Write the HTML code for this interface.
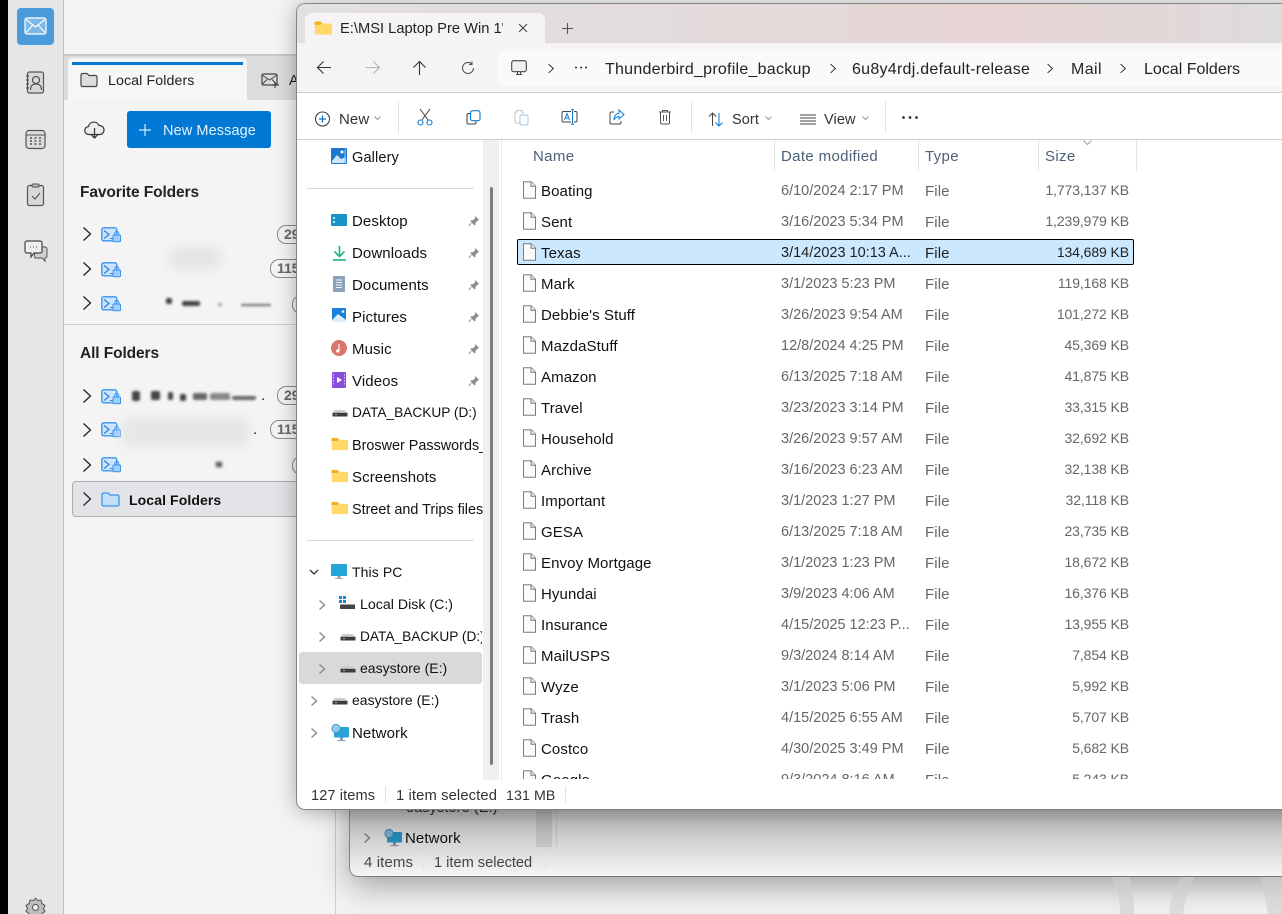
<!DOCTYPE html>
<html><head><meta charset="utf-8"><title>Explorer</title>
<style>
html,body{margin:0;padding:0;background:#f2f2f2}
#p{position:relative;width:1282px;height:914px;overflow:hidden;background:#f1f1f1;font-family:"Liberation Sans",sans-serif;font-size:15px;color:#1a1a1a}
#p div,#p svg{position:absolute}
.t{white-space:nowrap;line-height:20px;height:20px;letter-spacing:.1px;margin-top:2px}
.m1{margin-top:1px}
.n{font-size:15px;color:#111}
.g{color:#5f5f5f}
.h{color:#4c607a;letter-spacing:.35px}
.sep{background:#e3e3e3;width:1px}
.div{background:#d9d9d9;height:1px}
.r{left:0;width:640px;height:31px;line-height:31px;white-space:nowrap}
.r svg{left:20px;top:6px}
.r div{top:1px;height:31px;line-height:31px;letter-spacing:.1px}
.a{left:40px;color:#111}
.b{left:280px;color:#666;letter-spacing:0;width:135px;overflow:hidden;font-size:14.5px}
#p .r .b{letter-spacing:0}
.c{left:424px;color:#666}
.d{right:12px;color:#666;left:auto;font-size:14px}
#p .r .d{letter-spacing:-.1px;top:0}
.pill{border:1.5px solid #8a8a8a;border-radius:9px;height:17px;line-height:17px;font-size:14px;font-weight:bold;color:#666;padding:0 6px;box-sizing:content-box}
.smear{background:#dcdcdc;filter:blur(5px);border-radius:8px}
.sp{background:#444;filter:blur(1.200px);border-radius:2px}
</style></head><body>
<div id="p">
<svg width="0" height="0" style="position:absolute">
<defs>
<symbol id="file" viewBox="0 0 16 18"><path d="M2.500 .8h7.700l4.300 4.300v12.100h-12z" fill="#fbfbfb" stroke="#7b7b7b" stroke-width="1"/><path d="M10 .8v4.400h4.500" fill="#eee" stroke="#7b7b7b"/></symbol>
<symbol id="acct" viewBox="0 0 20 16"><rect x=".8" y=".8" width="15" height="13" rx="2" fill="#cfe4fb" stroke="#3b93ee" stroke-width="1.400"/><path d="M3 3.500l5 4-5 4" fill="none" stroke="#2b86e6" stroke-width="1.300"/><path d="M9 11.500h3" stroke="#2b86e6"/><rect x="12" y="8" width="7.500" height="6.800" rx="1" fill="#a5cef8" stroke="#3b93ee"/><path d="M13.800 8V6.400a2 2 0 0 1 4 0V8" fill="none" stroke="#3b93ee"/></symbol>
<symbol id="chev" viewBox="0 0 10 16"><path d="M1.500 1.500l7 6.500-7 6.500" fill="none" stroke="#222" stroke-width="1.300"/></symbol>
<symbol id="fold" viewBox="0 0 18 14"><path d="M.5 2a1.500 1.500 0 0 1 1.500-1.500h4.500l2 2h8a1.500 1.500 0 0 1 1.500 1.500v8a1.500 1.500 0 0 1-1.500 1.500h-14a1.500 1.500 0 0 1-1.500-1.500z" fill="#ffd96a"/><path d="M.5 2a1.500 1.500 0 0 1 1.500-1.500h4.500l2 2-2 1.300h-6z" fill="#f2b01e"/></symbol>
<symbol id="pin" viewBox="0 0 12 12"><path d="M7 .8l4.200 4.200-1.500.6-2 2-.3 2.400-1 .4-4-4 .4-1 2.400-.3 2-2z" fill="#8d8d8d"/><path d="M3.200 8.200L.8 11" stroke="#8d8d8d"/></symbol>
<symbol id="drive" viewBox="0 0 16 8"><path d="M3 1h10L15.500 4v3.500H.5V4z" fill="#cfcfcf"/><rect x=".5" y="3.800" width="15" height="3.700" fill="#3d3d3d"/><rect x="3" y="5" width="2" height="1" fill="#5ce06e"/></symbol>
<symbol id="net" viewBox="0 0 18 18"><rect x="3" y="3" width="15" height="10.500" rx="1" fill="#29a3d8"/><rect x="9" y="13.500" width="3" height="2.500" fill="#8a9aa8"/><rect x="6.500" y="16" width="8" height="1.200" fill="#9aa8b5"/><circle cx="5" cy="4.500" r="4.200" fill="#8ecbef" stroke="#3f8fc4" stroke-width=".8"/></symbol>
<symbol id="cr" viewBox="0 0 8 12"><path d="M1.500 1.500L6.500 6l-5 4.500" fill="none" stroke="#8c8c8c" stroke-width="1.400"/></symbol>
</defs></svg>

<!-- Thunderbird layer -->
<div style="left:0;top:0;width:8px;height:914px;background:#000"></div>
<div style="left:8px;top:0;width:55px;height:914px;background:#e6e6e6"></div>
<div style="left:63px;top:0;width:1px;height:914px;background:#bdbdbd"></div>
<div style="left:64px;top:0;width:1218px;height:54px;background:#f4f4f4"></div>
<div style="left:64px;top:54px;width:1218px;height:2px;background:#c8c8c8"></div>
<div style="left:64px;top:56px;width:240px;height:44px;background:#dcdcdc"></div>
<div style="left:64px;top:100px;width:271px;height:814px;background:#f4f4f4"></div>
<div style="left:335px;top:100px;width:1px;height:814px;background:#cfcfcf"></div>
<div style="left:336px;top:100px;width:946px;height:814px;background:#f3f3f3"></div>
<div style="left:68px;top:58px;width:179px;height:42px;background:#f6f6f6;border-radius:4px 4px 0 0"></div>
<div style="left:72px;top:62px;width:171px;height:3px;background:#0078d4"></div>
<svg style="left:80px;top:72px" width="18" height="16" viewBox="0 0 18 16"><path d="M1 3a1.500 1.500 0 0 1 1.500-1.500H7l2 2h6.500A1.500 1.500 0 0 1 17 5v8a1.500 1.500 0 0 1-1.500 1.500h-13A1.500 1.500 0 0 1 1 13z" fill="#ddd" stroke="#444" stroke-width="1.200"/></svg>
<div class="t m1" style="left:108px;top:70px;color:#222;font-size:14.2px">Local Folders</div>
<svg style="left:261px;top:72px" width="19" height="17" viewBox="0 0 19 17"><rect x="1" y="2" width="15" height="11" rx="1.500" fill="#ddd" stroke="#444" stroke-width="1.200"/><path d="M1 3l7.500 5 7.500-5M1 12.500l5-5M16 12.500l-5-5" fill="none" stroke="#444"/><path d="M14 10v6M11 13h7" stroke="#444" stroke-width="1.200"/></svg>
<div class="t m1" style="left:289px;top:70px;color:#222;font-size:14.5px">A</div>

<!-- rail -->
<div style="left:17px;top:8px;width:37px;height:37px;background:#4a9bdc;border-radius:4px"></div>
<svg style="left:24px;top:17px" width="23" height="19" viewBox="0 0 23 19"><rect x="1" y="1" width="21" height="16" rx="2" fill="#7cb8e8" stroke="#e8f3fc" stroke-width="1.400"/><path d="M2 2.500l9.500 7.500 9.500-7.500M2 15.500l6.500-7M21 15.500l-6.500-7" fill="none" stroke="#fff" stroke-width="1.200"/></svg>
<svg style="left:25px;top:71px" width="20" height="23" viewBox="0 0 20 23"><rect x="2.500" y="1" width="16" height="21" rx="2" fill="#d8d8d8" stroke="#555" stroke-width="1.200"/><circle cx="11" cy="9" r="3.500" fill="none" stroke="#444" stroke-width="1.100"/><path d="M5.500 19c0-4 2-6 5.500-6s5.500 2 5.500 6" fill="none" stroke="#444" stroke-width="1.100"/><path d="M1 5h3M1 9h3M1 13h3M1 17h3" stroke="#444"/></svg>
<svg style="left:25px;top:129px" width="21" height="21" viewBox="0 0 21 21"><rect x="1" y="1.500" width="19" height="18" rx="3" fill="#dcdcdc" stroke="#555" stroke-width="1.200"/><path d="M1 6h19" stroke="#555"/><path d="M5 9h2M9.500 9h2M14 9h2M5 12h2M9.500 12h2M14 12h2M5 15h2M9.500 15h2M14 15h2" stroke="#555" stroke-width="1.500"/></svg>
<svg style="left:26px;top:183px" width="19" height="24" viewBox="0 0 19 24"><rect x="1.500" y="2.500" width="16" height="20" rx="2" fill="#d8d8d8" stroke="#555" stroke-width="1.200"/><rect x="6" y="1" width="7" height="3" rx="1" fill="#bbb" stroke="#555"/><path d="M6 13l3 3 5-6" fill="none" stroke="#555" stroke-width="1.100"/></svg>
<svg style="left:24px;top:240px" width="24" height="23" viewBox="0 0 24 23"><path d="M9 7h12a2 2 0 0 1 2 2v7a2 2 0 0 1-2 2v3l-3-3h-7z" fill="#cfcfcf" stroke="#555"/><path d="M3 1h13a2 2 0 0 1 2 2v8a2 2 0 0 1-2 2h-6l-3 4v-4H3a2 2 0 0 1-2-2V3a2 2 0 0 1 2-2z" fill="#efefef" stroke="#444" stroke-width="1.200"/><path d="M6 7h1M9 7h1M12 7h1" stroke="#555"/></svg>
<svg style="left:25px;top:897px" width="21" height="20" viewBox="0 0 21 20"><path d="M10.500 1l2 2.500 3.500-.5 1 3.500 3 2-1.500 3 1.500 3-3 2-1 3h-11l-1-3-3-2 1.500-3-1.500-3 3-2 1-3.500 3.500.5z" fill="#bcbcbc" stroke="#555"/><circle cx="10.500" cy="10.500" r="3" fill="#eee" stroke="#555"/></svg>

<!-- mail pane -->
<svg style="left:84px;top:120px" width="21" height="20" viewBox="0 0 21 20"><path d="M5 14.500a4 4 0 0 1-.5-8 5.500 5.500 0 0 1 10.500-1 4.500 4.500 0 0 1 1 9z" fill="#ececec" stroke="#333" stroke-width="1.200"/><path d="M10.500 8v10M7 14.500l3.500 3.500 3.500-3.500" fill="none" stroke="#333" stroke-width="1.200"/></svg>
<div style="left:127px;top:111px;width:144px;height:37px;background:#0078d4;border-radius:3px"></div>
<svg style="left:139px;top:124px" width="12" height="12" viewBox="0 0 12 12"><path d="M6 0v12M0 6h12" stroke="#d9ecfb" stroke-width="1.200"/></svg>
<div class="t m1" style="left:163px;top:120px;color:#e4f2fd;font-size:14.5px">New Message</div>
<div class="t" style="left:80px;top:181px;font-size:15.5px;font-weight:bold;color:#222;letter-spacing:-.1px">Favorite Folders</div>
<div class="t" style="left:80px;top:342px;font-size:15.5px;font-weight:bold;color:#222;letter-spacing:-.1px">All Folders</div>
<div class="div" style="left:64px;top:324px;width:233px;background:#d0d0d0"></div>

<svg style="left:82px;top:226px" width="10" height="16"><use href="#chev"/></svg>
<svg style="left:82px;top:261px" width="10" height="16"><use href="#chev"/></svg>
<svg style="left:82px;top:295px" width="10" height="16"><use href="#chev"/></svg>
<svg style="left:101px;top:227px" width="20" height="16"><use href="#acct"/></svg>
<svg style="left:101px;top:262px" width="20" height="16"><use href="#acct"/></svg>
<svg style="left:101px;top:296px" width="20" height="16"><use href="#acct"/></svg>
<div class="smear" style="left:170px;top:247px;width:50px;height:22px;background:#e4e4e4"></div>
<div class="sp" style="left:166px;top:298px;width:6px;height:6px"></div>
<div class="sp" style="left:182px;top:301px;width:18px;height:5px"></div>
<div class="sp" style="left:218px;top:303px;width:4px;height:3px;background:#999"></div>
<div class="sp" style="left:241px;top:304px;width:30px;height:2px;background:#666"></div>
<div class="pill" style="left:277px;top:225px">29</div>
<div class="pill" style="left:270px;top:259px">115</div>
<div class="pill" style="left:292px;top:295px">1</div>

<svg style="left:82px;top:388px" width="10" height="16"><use href="#chev"/></svg>
<svg style="left:82px;top:422px" width="10" height="16"><use href="#chev"/></svg>
<svg style="left:82px;top:457px" width="10" height="16"><use href="#chev"/></svg>
<svg style="left:101px;top:389px" width="20" height="16"><use href="#acct"/></svg>
<svg style="left:101px;top:422px" width="20" height="16"><use href="#acct"/></svg>
<svg style="left:101px;top:457px" width="20" height="16"><use href="#acct"/></svg>
<div class="sp" style="left:132px;top:391px;width:8px;height:10px"></div>
<div class="sp" style="left:151px;top:391px;width:9px;height:9px"></div>
<div class="sp" style="left:168px;top:392px;width:5px;height:8px"></div>
<div class="sp" style="left:180px;top:394px;width:6px;height:7px"></div>
<div class="sp" style="left:193px;top:393px;width:14px;height:7px;background:#666"></div>
<div class="sp" style="left:210px;top:393px;width:20px;height:7px;background:#888"></div>
<div class="sp" style="left:232px;top:396px;width:24px;height:4px;background:#666"></div>
<div class="t" style="left:261px;top:384px;color:#222">.</div>
<div class="smear" style="left:122px;top:418px;width:128px;height:28px;background:#e6e6e6"></div>
<div class="t" style="left:253px;top:418px;color:#222">.</div>
<div class="pill" style="left:277px;top:386px">29</div>
<div class="pill" style="left:270px;top:420px">115</div>
<div class="pill" style="left:292px;top:456px">1</div>
<div style="left:216px;top:462px;width:6px;height:5px;background:#444;filter:blur(1.500px)"></div>
<div style="left:72px;top:481px;width:240px;height:34px;background:#e3e4e7;border:1px solid #adadad;border-radius:4px"></div>
<svg style="left:82px;top:491px" width="10" height="16"><use href="#chev"/></svg>
<svg style="left:101px;top:492px" width="19" height="15" viewBox="0 0 19 15"><path d="M1 2.500A1.500 1.500 0 0 1 2.500 1H7l2 2h7.500A1.500 1.500 0 0 1 18 4.500v8a1.500 1.500 0 0 1-1.500 1.500h-14A1.500 1.500 0 0 1 1 12.500z" fill="#c3dff9" stroke="#3b93ee" stroke-width="1.300"/></svg>
<div class="t" style="left:129px;top:488px;font-weight:bold;font-size:14px;color:#111">Local Folders</div>

<!-- Back explorer -->
<div style="left:350px;top:500px;width:960px;height:376px;background:#fbfbfb;border-radius:0 0 8px 8px;box-shadow:0 8px 34px rgba(0,0,0,.38),0 0 0 1px #9e9e9e"></div>
<svg style="left:1090px;top:877px" width="192" height="37" viewBox="0 0 192 37"><path d="M22 0c6 12 8 25 8 37h14C44 22 42 10 40 0zM92 0c-7 10-12 24-13 37h14c2-14 6-26 12-37zM170 0c2 12 7 26 8 37h14V0z" fill="#cfcfcf" opacity=".6"/></svg>
<div style="left:536px;top:800px;width:16px;height:47px;background:#e6e6e6"></div>
<div style="left:556px;top:800px;width:1px;height:47px;background:#e8e8e8"></div>
<div class="t" style="left:406px;top:796px;color:#333;font-size:14.5px">easystore (E:)</div>
<svg style="left:363px;top:832px" width="8" height="12"><use href="#cr"/></svg>
<svg style="left:384px;top:829px" width="18" height="18"><use href="#net"/></svg>
<div class="t n" style="left:405px;top:827px;">Network</div>
<div style="left:350px;top:809px;width:932px;height:67px;background:linear-gradient(180deg,rgba(0,0,0,.3),rgba(0,0,0,.02));border-radius:0 0 0 8px"></div>
<div class="t" style="left:364px;top:851px;color:#444">4 items</div>
<div class="sep" style="left:423px;top:853px;height:17px"></div>
<div class="t" style="left:434px;top:851px;color:#444;letter-spacing:0;font-size:14.6px">1 item selected</div>
<div class="sep" style="left:545px;top:853px;height:17px"></div>

<!-- Front explorer -->
<div style="left:297px;top:4px;width:1000px;height:805px;background:#fff;border-radius:8px 0 0 8px;box-shadow:0 2px 22px rgba(0,0,0,.34),0 0 0 1px #9c9c9c;overflow:hidden">
  <div style="left:0;top:0;width:1000px;height:39px;background:linear-gradient(90deg,#e3e0e0 0%,#e2dcdc 35%,#e8d4d4 70%,#dddcdc 100%)"></div>
  <div style="left:0;top:39px;width:1000px;height:49px;background:#f5f3f3"></div>
  <div style="left:0;top:88px;width:1000px;height:1px;background:#cfcaca"></div>
  <div style="left:0;top:135px;width:1000px;height:1px;background:#d2cfcf"></div>
</div>
<div style="left:305px;top:13px;width:240px;height:31px;background:#f5f3f3;border-radius:7px 7px 0 0"></div>
<svg style="left:314px;top:21px" width="18" height="14"><use href="#fold"/></svg>
<div class="t m1" style="left:340px;top:18px;width:163px;overflow:hidden;font-size:14.7px;color:#222;letter-spacing:0">E:\MSI Laptop Pre Win 1'</div>
<svg style="left:518px;top:23px" width="10" height="10" viewBox="0 0 10 10"><path d="M1 1l8 8M9 1l-8 8" stroke="#444" stroke-width="1.100"/></svg>
<svg style="left:562px;top:23px" width="11" height="11" viewBox="0 0 11 11"><path d="M5.500 0v11M0 5.500h11" stroke="#555" stroke-width="1.100"/></svg>

<svg style="left:316px;top:60px" width="16" height="15" viewBox="0 0 16 15"><path d="M15 7.500H2M7.500 1.500l-6 6 6 6" fill="none" stroke="#333" stroke-width="1.100"/></svg>
<svg style="left:365px;top:60px" width="16" height="15" viewBox="0 0 16 15"><path d="M1 7.500h13M8.500 1.500l6 6-6 6" fill="none" stroke="#b4b4b4" stroke-width="1.100"/></svg>
<svg style="left:412px;top:60px" width="15" height="16" viewBox="0 0 15 16"><path d="M7.500 15V2M1.500 7.500l6-6 6 6" fill="none" stroke="#333" stroke-width="1.100"/></svg>
<svg style="left:461px;top:61px" width="14" height="14" viewBox="0 0 14 14"><path d="M12.500 7a5.500 5.500 0 1 1-1.700-4M11 .5V3.500H8" fill="none" stroke="#555" stroke-width="1.100"/></svg>
<div style="left:498px;top:51px;width:784px;height:35px;background:#fbfafa;border-radius:5px 0 0 5px"></div>
<svg style="left:511px;top:60px" width="16" height="16" viewBox="0 0 16 16"><rect x=".7" y=".7" width="14.600" height="11" rx="2" fill="#f0f0f0" stroke="#444" stroke-width="1.100"/><path d="M5 14.500h6M6.500 12v2.500M9.500 12v2.500" stroke="#444"/></svg>
<svg style="left:547px;top:63px" width="8" height="11"><use href="#chev"/></svg>
<svg style="left:575px;top:66px" width="13" height="3" viewBox="0 0 13 3"><path d="M0 1.500h2M5 1.500h2M10 1.500h2" stroke="#333" stroke-width="1.600"/></svg>
<div class="t m1" style="left:605px;top:59px;font-size:16px;letter-spacing:.25px;color:#222">Thunderbird_profile_backup</div>
<svg style="left:829px;top:63px" width="8" height="11"><use href="#chev"/></svg>
<div class="t m1" style="left:852px;top:59px;font-size:16px;letter-spacing:.27px;color:#222">6u8y4rdj.default-release</div>
<svg style="left:1046px;top:63px" width="8" height="11"><use href="#chev"/></svg>
<div class="t m1" style="left:1071px;top:59px;font-size:16px;letter-spacing:.4px;color:#222">Mail</div>
<svg style="left:1119px;top:63px" width="8" height="11"><use href="#chev"/></svg>
<div class="t m1" style="left:1144px;top:59px;font-size:16px;letter-spacing:0;color:#222">Local Folders</div>

<!-- toolbar -->
<svg style="left:314px;top:111px" width="17" height="16" viewBox="0 0 17 16"><circle cx="8.500" cy="8" r="7" fill="none" stroke="#444" stroke-width="1.100"/><path d="M8.500 4.500v7M5 8h7" stroke="#0b73c9" stroke-width="1.200"/></svg>
<div class="t m1" style="left:339px;top:109px;color:#333">New</div>
<svg style="left:374px;top:116px" width="7" height="5" viewBox="0 0 7 5"><path d="M.5 .5l3 3 3-3" fill="none" stroke="#999"/></svg>
<div class="sep" style="left:398px;top:101px;height:32px"></div>
<svg style="left:417px;top:108px" width="16" height="18" viewBox="0 0 16 18"><path d="M3 1l8.500 11.500M13 1L4.500 12.500" stroke="#444" stroke-width="1"/><circle cx="3.500" cy="14.500" r="2.500" fill="none" stroke="#0b7ad1" stroke-width="1.100"/><circle cx="12.500" cy="14.500" r="2.500" fill="none" stroke="#0b7ad1" stroke-width="1.100"/></svg>
<svg style="left:466px;top:110px" width="15" height="15" viewBox="0 0 15 15"><rect x="4.500" y=".7" width="9.500" height="10" rx="2" fill="none" stroke="#0b7ad1" stroke-width="1.100"/><path d="M4 3.500H2.500A1.500 1.500 0 0 0 1 5v7.500A1.500 1.500 0 0 0 2.500 14h6a1.500 1.500 0 0 0 1.500-1.500V11.500" fill="none" stroke="#444" stroke-width="1.100"/></svg>
<svg style="left:514px;top:109px" width="15" height="17" viewBox="0 0 15 17"><path d="M1 3h2V1.500h5V3h1v11H2.500A1.500 1.500 0 0 1 1 12.500z" fill="none" stroke="#c6c6c6"/><rect x="6" y="6" width="8" height="10" rx="1.500" fill="#fff" stroke="#9cc9ec"/></svg>
<svg style="left:561px;top:109px" width="17" height="16" viewBox="0 0 17 16"><path d="M10 2.500H2.500A1.500 1.500 0 0 0 1 4v7.500A1.500 1.500 0 0 0 2.500 13H10M13 2.500h1.500A1.500 1.500 0 0 1 16 4v7.500A1.500 1.500 0 0 1 14.500 13H13" fill="none" stroke="#444"/><path d="M11.500 1v14M10 .7h3M10 15.300h3" stroke="#0b7ad1"/><path d="M3.500 11l2.500-6.500L8.500 11M4.500 9h3" fill="none" stroke="#0b7ad1"/></svg>
<svg style="left:609px;top:109px" width="16" height="16" viewBox="0 0 16 16"><path d="M5 3H2.500A1.500 1.500 0 0 0 1 4.500v9A1.500 1.500 0 0 0 2.500 15h8a1.500 1.500 0 0 0 1.500-1.500V12" fill="none" stroke="#444"/><path d="M10 1l5 4.500-5 4.500V7.500C7.500 7.500 6 9 5 11c0-4 2-6.500 5-6.500z" fill="none" stroke="#0b7ad1"/></svg>
<svg style="left:658px;top:109px" width="14" height="16" viewBox="0 0 14 16"><path d="M1 3h12M4.500 3V1.500h5V3M2.500 3v10.500A1.500 1.500 0 0 0 4 15h6a1.500 1.500 0 0 0 1.500-1.500V3M5.500 6v6M8.500 6v6" fill="none" stroke="#555"/></svg>
<div class="sep" style="left:691px;top:101px;height:32px"></div>
<svg style="left:708px;top:112px" width="16" height="15" viewBox="0 0 16 15"><path d="M4.500 14V1M1 4.500l3.500-3.500L8 4.500" fill="none" stroke="#444"/><path d="M11 1v13M7.500 10.500L11 14l3.500-3.500" fill="none" stroke="#0b7ad1"/></svg>
<div class="t m1" style="left:732px;top:109px;color:#333;font-size:14.5px">Sort</div>
<svg style="left:765px;top:116px" width="7" height="5" viewBox="0 0 7 5"><path d="M.5 .5l3 3 3-3" fill="none" stroke="#999"/></svg>
<svg style="left:800px;top:114px" width="16" height="11" viewBox="0 0 16 11"><path d="M0 1h16M0 4h16M0 7h16M0 10h16" stroke="#444"/></svg>
<div class="t m1" style="left:824px;top:109px;color:#333;font-size:14.5px">View</div>
<svg style="left:862px;top:116px" width="7" height="5" viewBox="0 0 7 5"><path d="M.5 .5l3 3 3-3" fill="none" stroke="#999"/></svg>
<div class="sep" style="left:885px;top:101px;height:32px"></div>
<svg style="left:902px;top:116px" width="16" height="3" viewBox="0 0 16 3"><circle cx="1.500" cy="1.500" r="1.400" fill="#333"/><circle cx="8" cy="1.500" r="1.400" fill="#333"/><circle cx="14.500" cy="1.500" r="1.400" fill="#333"/></svg>

<!-- nav -->
<div style="left:483px;top:140px;width:16px;height:640px;background:#f0f0f0"></div>
<div style="left:490px;top:187px;width:3px;height:578px;background:#7c7c7c;border-radius:2px"></div>
<div style="left:501px;top:140px;width:1px;height:640px;background:#ececec"></div>
<div class="div" style="left:307px;top:188px;width:167px"></div>
<div class="div" style="left:307px;top:540px;width:167px"></div>

<svg style="left:331px;top:148px" width="16" height="16" viewBox="0 0 16 16"><rect width="16" height="16" rx="1" fill="#1e78cf"/><path d="M1 13l5-6 4 4 5-2v6H1z" fill="#cfe7fa"/><circle cx="11" cy="4" r="1.500" fill="#fff"/><path d="M14 1v14" stroke="#8fc4ee"/></svg>
<div class="t n" style="left:352px;top:146px;font-size:14.6px">Gallery</div>
<svg style="left:331px;top:214px" width="17" height="12" viewBox="0 0 17 12"><rect width="16" height="12" rx="1" fill="#1893c7"/><rect x="2" y="3" width="2" height="2" fill="#bfeaf8"/><rect x="2" y="7" width="2" height="2" fill="#bfeaf8"/></svg>
<div class="t n" style="left:352px;top:210px">Desktop</div>
<svg style="left:333px;top:245px" width="13" height="16" viewBox="0 0 13 16"><path d="M6.500 1v10M1.500 6.500l5 5 5-5" fill="none" stroke="#1eb18c" stroke-width="1.600"/><path d="M0 15h13" stroke="#1eb18c" stroke-width="1.600"/></svg>
<div class="t n" style="left:352px;top:242px">Downloads</div>
<svg style="left:333px;top:276px" width="13" height="16" viewBox="0 0 13 16"><rect width="12" height="16" rx="1" fill="#8ba1bb"/><path d="M3 4h6M3 6.500h6M3 9h6M3 11.500h6" stroke="#eef2f7"/></svg>
<div class="t n" style="left:352px;top:274px">Documents</div>
<svg style="left:332px;top:308px" width="15" height="15" viewBox="0 0 15 15"><rect width="14" height="14" rx="1" fill="#1a80d8"/><path d="M0 12l6-6 8 6v2H0z" fill="#dceffc"/><circle cx="11" cy="3.500" r="1.300" fill="#fff"/></svg>
<div class="t n" style="left:352px;top:306px">Pictures</div>
<svg style="left:331px;top:340px" width="16" height="16" viewBox="0 0 16 16"><circle cx="8" cy="8" r="8" fill="#d9776d"/><path d="M8 4v7" stroke="#fff" stroke-width="1.200"/><circle cx="6.800" cy="11" r="1.600" fill="#fff"/></svg>
<div class="t n" style="left:352px;top:338px">Music</div>
<svg style="left:332px;top:372px" width="15" height="16" viewBox="0 0 15 16"><rect width="14" height="16" rx="1" fill="#8a4fd8"/><path d="M5 5l5 3-5 3z" fill="#fff"/><path d="M1.500 2v12M12.500 2v12" stroke="#d8bdf8" stroke-dasharray="1.500 1.500"/></svg>
<div class="t n" style="left:352px;top:370px">Videos</div>
<svg style="left:468px;top:215px" width="12" height="12"><use href="#pin"/></svg>
<svg style="left:468px;top:247px" width="12" height="12"><use href="#pin"/></svg>
<svg style="left:468px;top:279px" width="12" height="12"><use href="#pin"/></svg>
<svg style="left:468px;top:311px" width="12" height="12"><use href="#pin"/></svg>
<svg style="left:468px;top:343px" width="12" height="12"><use href="#pin"/></svg>
<svg style="left:468px;top:375px" width="12" height="12"><use href="#pin"/></svg>
<svg style="left:332px;top:409px" width="16" height="8"><use href="#drive"/></svg>
<div class="t n" style="left:352px;top:401px;width:131px;overflow:hidden;letter-spacing:0;font-size:13.7px">DATA_BACKUP (D:)</div>
<svg style="left:331px;top:437px" width="17" height="14"><use href="#fold"/></svg>
<div class="t n" style="left:352px;top:434px;width:131px;overflow:hidden;font-size:14.4px;letter-spacing:0">Broswer Passwords_</div>
<svg style="left:331px;top:469px" width="17" height="14"><use href="#fold"/></svg>
<div class="t n" style="left:352px;top:466px">Screenshots</div>
<svg style="left:331px;top:501px" width="17" height="14"><use href="#fold"/></svg>
<div class="t n" style="left:352px;top:498px;width:131px;overflow:hidden;font-size:14.4px;letter-spacing:0">Street and Trips files</div>
<svg style="left:309px;top:569px" width="10" height="6" viewBox="0 0 10 6"><path d="M1 1l4 4 4-4" fill="none" stroke="#333" stroke-width="1.300"/></svg>
<svg style="left:331px;top:564px" width="17" height="18" viewBox="0 0 17 18"><rect width="16" height="12" rx="1" fill="#22a6d6"/><rect x="6.500" y="12" width="3" height="2" fill="#8ea2b0"/><rect x="4" y="14" width="8" height="1" fill="#a6b4bf"/></svg>
<div class="t n" style="left:352px;top:560px;font-size:14px">This PC</div>
<svg style="left:318px;top:599px" width="8" height="12"><use href="#cr"/></svg>
<svg style="left:339px;top:596px" width="16" height="14" viewBox="0 0 16 14"><rect x="0" y="0" width="3" height="3" fill="#1a86d8"/><rect x="4" y="0" width="3" height="3" fill="#1a86d8"/><rect x="0" y="4" width="3" height="3" fill="#1a86d8"/><rect x="4" y="4" width="3" height="3" fill="#1a86d8"/><rect x="1" y="8.500" width="15" height="4.500" fill="#444"/></svg>
<div class="t n" style="left:360px;top:593px;font-size:14.2px;letter-spacing:0">Local Disk (C:)</div>
<svg style="left:318px;top:631px" width="8" height="12"><use href="#cr"/></svg>
<svg style="left:340px;top:633px" width="16" height="8"><use href="#drive"/></svg>
<div class="t n" style="left:360px;top:625px;width:122px;overflow:hidden;letter-spacing:0;font-size:13.7px">DATA_BACKUP (D:)</div>
<div style="left:299px;top:652px;width:183px;height:32px;background:#d9d9d9;border-radius:3px"></div>
<svg style="left:318px;top:663px" width="8" height="12"><use href="#cr"/></svg>
<svg style="left:340px;top:665px" width="16" height="8"><use href="#drive"/></svg>
<div class="t n" style="left:360px;top:656px;font-size:14px;letter-spacing:0">easystore (E:)</div>
<svg style="left:310px;top:695px" width="8" height="12"><use href="#cr"/></svg>
<svg style="left:332px;top:697px" width="16" height="8"><use href="#drive"/></svg>
<div class="t n" style="left:352px;top:688px;font-size:14px;letter-spacing:0">easystore (E:)</div>
<svg style="left:310px;top:727px" width="8" height="12"><use href="#cr"/></svg>
<svg style="left:331px;top:724px" width="18" height="18"><use href="#net"/></svg>
<div class="t n" style="left:352px;top:722px">Network</div>

<!-- headers -->
<div class="t h" style="left:533px;top:145px">Name</div>
<div class="t h" style="left:781px;top:145px">Date modified</div>
<div class="t h" style="left:925px;top:145px">Type</div>
<div class="t h" style="left:1045px;top:145px">Size</div>
<div class="sep" style="left:774px;top:140px;height:31px"></div>
<div class="sep" style="left:918px;top:140px;height:31px"></div>
<div class="sep" style="left:1038px;top:140px;height:31px"></div>
<div class="sep" style="left:1136px;top:140px;height:31px"></div>
<svg style="left:1083px;top:140px" width="9" height="5" viewBox="0 0 9 5"><path d="M.5 .5l4 4 4-4" fill="none" stroke="#999"/></svg>

<!-- list -->
<div style="left:517px;top:239px;width:615px;height:24px;background:#cce8ff;border:1px solid #000;border-radius:2px"></div>
<div style="left:501px;top:175px;width:640px;height:604px;overflow:hidden">
<div class="r" style="top:0"><svg width="16" height="18"><use href="#file"/></svg><div class="a">Boating</div><div class="b">6/10/2024 2:17 PM</div><div class="c">File</div><div class="d">1,773,137 KB</div></div>
<div class="r" style="top:31px"><svg width="16" height="18"><use href="#file"/></svg><div class="a">Sent</div><div class="b">3/16/2023 5:34 PM</div><div class="c">File</div><div class="d">1,239,979 KB</div></div>
<div class="r" style="top:62px"><svg width="16" height="18"><use href="#file"/></svg><div class="a">Texas</div><div class="b" style="color:#222">3/14/2023 10:13 A...</div><div class="c" style="color:#222">File</div><div class="d" style="color:#222">134,689 KB</div></div>
<div class="r" style="top:93px"><svg width="16" height="18"><use href="#file"/></svg><div class="a">Mark</div><div class="b">3/1/2023 5:23 PM</div><div class="c">File</div><div class="d">119,168 KB</div></div>
<div class="r" style="top:124px"><svg width="16" height="18"><use href="#file"/></svg><div class="a">Debbie's Stuff</div><div class="b">3/26/2023 9:54 AM</div><div class="c">File</div><div class="d">101,272 KB</div></div>
<div class="r" style="top:155px"><svg width="16" height="18"><use href="#file"/></svg><div class="a">MazdaStuff</div><div class="b">12/8/2024 4:25 PM</div><div class="c">File</div><div class="d">45,369 KB</div></div>
<div class="r" style="top:186px"><svg width="16" height="18"><use href="#file"/></svg><div class="a">Amazon</div><div class="b">6/13/2025 7:18 AM</div><div class="c">File</div><div class="d">41,875 KB</div></div>
<div class="r" style="top:217px"><svg width="16" height="18"><use href="#file"/></svg><div class="a">Travel</div><div class="b">3/23/2023 3:14 PM</div><div class="c">File</div><div class="d">33,315 KB</div></div>
<div class="r" style="top:248px"><svg width="16" height="18"><use href="#file"/></svg><div class="a">Household</div><div class="b">3/26/2023 9:57 AM</div><div class="c">File</div><div class="d">32,692 KB</div></div>
<div class="r" style="top:279px"><svg width="16" height="18"><use href="#file"/></svg><div class="a">Archive</div><div class="b">3/16/2023 6:23 AM</div><div class="c">File</div><div class="d">32,138 KB</div></div>
<div class="r" style="top:310px"><svg width="16" height="18"><use href="#file"/></svg><div class="a">Important</div><div class="b">3/1/2023 1:27 PM</div><div class="c">File</div><div class="d">32,118 KB</div></div>
<div class="r" style="top:341px"><svg width="16" height="18"><use href="#file"/></svg><div class="a">GESA</div><div class="b">6/13/2025 7:18 AM</div><div class="c">File</div><div class="d">23,735 KB</div></div>
<div class="r" style="top:372px"><svg width="16" height="18"><use href="#file"/></svg><div class="a">Envoy Mortgage</div><div class="b">3/1/2023 1:23 PM</div><div class="c">File</div><div class="d">18,672 KB</div></div>
<div class="r" style="top:403px"><svg width="16" height="18"><use href="#file"/></svg><div class="a">Hyundai</div><div class="b">3/9/2023 4:06 AM</div><div class="c">File</div><div class="d">16,376 KB</div></div>
<div class="r" style="top:434px"><svg width="16" height="18"><use href="#file"/></svg><div class="a">Insurance</div><div class="b">4/15/2025 12:23 P...</div><div class="c">File</div><div class="d">13,955 KB</div></div>
<div class="r" style="top:465px"><svg width="16" height="18"><use href="#file"/></svg><div class="a">MailUSPS</div><div class="b">9/3/2024 8:14 AM</div><div class="c">File</div><div class="d">7,854 KB</div></div>
<div class="r" style="top:496px"><svg width="16" height="18"><use href="#file"/></svg><div class="a">Wyze</div><div class="b">3/1/2023 5:06 PM</div><div class="c">File</div><div class="d">5,992 KB</div></div>
<div class="r" style="top:527px"><svg width="16" height="18"><use href="#file"/></svg><div class="a">Trash</div><div class="b">4/15/2025 6:55 AM</div><div class="c">File</div><div class="d">5,707 KB</div></div>
<div class="r" style="top:558px"><svg width="16" height="18"><use href="#file"/></svg><div class="a">Costco</div><div class="b">4/30/2025 3:49 PM</div><div class="c">File</div><div class="d">5,682 KB</div></div>
<div class="r" style="top:589px"><svg width="16" height="18"><use href="#file"/></svg><div class="a">Google</div><div class="b">9/3/2024 8:16 AM</div><div class="c">File</div><div class="d">5,243 KB</div></div>
</div>

<!-- status -->
<div class="t" style="left:311px;top:784px;color:#333;font-size:14.6px">127 items</div>
<div class="sep" style="left:385px;top:786px;height:17px"></div>
<div class="t" style="left:396px;top:784px;color:#333;font-size:14.8px">1 item selected</div>
<div class="t" style="left:506px;top:784px;color:#333;font-size:14.2px">131 MB</div>
<div class="sep" style="left:565px;top:786px;height:17px"></div>
</div>
</body></html>
